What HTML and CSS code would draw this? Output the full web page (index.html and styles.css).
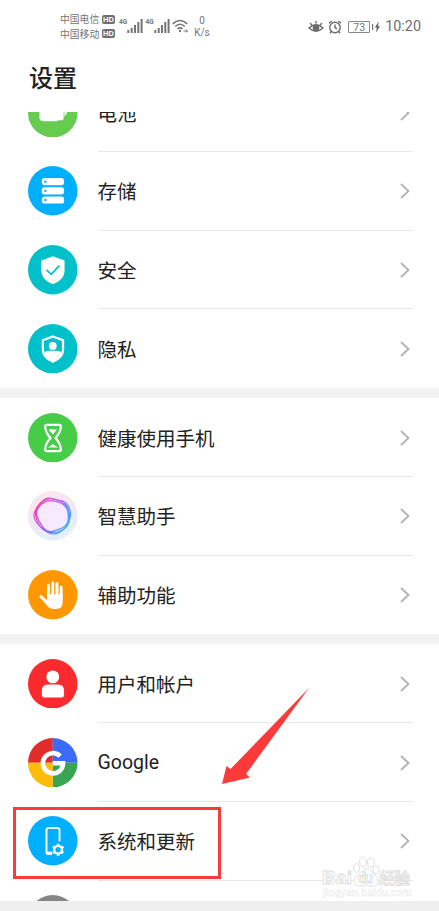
FILE: index.html
```html
<!DOCTYPE html>
<html lang="zh-CN">
<head>
<meta charset="utf-8">
<title>设置</title>
<link rel="stylesheet" href="styles.css">
</head>
<body>
<div class="screen">
  <header class="status">
    <div class="carriers">
      <div class="carrier">中国电信<span class="hd">HD</span></div>
      <div class="carrier">中国移动<span class="hd">HD</span></div>
    </div>
    <div class="signal"><span class="gen">4G</span>
      <svg width="16" height="14" viewBox="0 0 16 14"><path d="M1.3 11v3M4.7 9v5M8 6v8M11.3 3v11M14.6 0v14" stroke="#757575" stroke-width="2"/></svg></div>
    <div class="signal"><span class="gen">4G</span>
      <svg width="16" height="14" viewBox="0 0 16 14"><path d="M1.3 11v3M4.7 9v5M8 6v8M11.3 3v11M14.6 0v14" stroke="#757575" stroke-width="2"/></svg></div>
    <svg class="wifi" width="17" height="15" viewBox="0 0 17 15" fill="none" stroke="#757575" stroke-width="1.6"><path d="M.8 5Q8 -2 15.2 5M3.2 7.5Q8 3 12.8 7.5M5.5 10Q8 7.6 10.5 10"/><circle cx="8" cy="12" r="1.2" fill="#757575" stroke="none"/><path d="M11.5 12h4M14 10.5l1.5 1.5L14 13.5" stroke-width="1"/></svg>
    <div class="speed"><span>0</span><span>K/s</span></div>
    <div class="status-right">
      <svg class="eye" width="16" height="14" viewBox="0 0 16 14" fill="none" stroke="#6b6b6b" stroke-width="1.4"><path d="M1 8Q8 1.5 15 8Q8 14.5 1 8ZM2 3l1.7 2M8 1v2.5M14 3l-1.7 2"/><circle cx="8" cy="8" r="2.6" fill="#6b6b6b"/></svg>
      <svg class="alarm" width="14" height="14" viewBox="0 0 14 14" fill="none" stroke="#6b6b6b" stroke-width="1.4"><circle cx="7" cy="7.5" r="5.2"/><path d="M1 3.3L3.7 1M13 3.3L10.3 1M7 4.6v3l2 1.3M3.3 11.5L2 13.3M10.7 11.5l1.3 1.8"/></svg>
      <span class="battery">73</span>
      <svg class="bolt" width="9" height="12" viewBox="0 0 9 12"><path d="M.6 3v6" stroke="#777" stroke-width="1.2"/><path d="M6.8.5L2.8 6.5h2l-.8 5 4-6.3H6z" fill="#666"/></svg>
      <span class="clock">10:20</span>
    </div>
  </header>
  <h1 class="title">设置</h1>
  <main class="viewport">
    <div class="list">
      <section class="group">
        <div class="row">
          <svg class="icon" viewBox="0 0 49 49"><circle cx="24.5" cy="24.5" r="24.5" fill="#66cb4e"/><path d="M11.3 17h24v13q0 2-2 2h-3l-2 .8H15q-3.700 0-3.700-3zM36 20h2.500v5l-2.400 3.500z" fill="#fff"/></svg>
          <div class="cell"><span>电池</span><svg class="chevron" viewBox="0 0 10 16"><path d="M1 1l7.5 7L1 15"/></svg></div>
        </div>
        <div class="row">
          <svg class="icon" viewBox="0 0 49 49"><circle cx="24.5" cy="24.5" r="24.5" fill="#00b0ff"/><g fill="#fff"><rect x="13.7" y="12" width="22" height="7" rx="2.6"/><rect x="13.7" y="21.1" width="22" height="7" rx="2.6"/><rect x="13.7" y="30.2" width="22" height="7" rx="2.6"/></g><g fill="#00b0ff"><circle cx="17.2" cy="15.5" r="1.2"/><circle cx="17.2" cy="24.6" r="1.2"/><circle cx="17.2" cy="33.7" r="1.2"/></g></svg>
          <div class="cell"><span>存储</span><svg class="chevron" viewBox="0 0 10 16"><path d="M1 1l7.5 7L1 15"/></svg></div>
        </div>
        <div class="row">
          <svg class="icon" viewBox="0 0 49 49"><circle cx="24.5" cy="24.5" r="24.5" fill="#00c0ca"/><path d="M24.6 11.2L36.2 15.3V25c0 6.5-4 11-11.6 13.8C17 36 13.2 31.5 13.2 25V15.3z" fill="#fff"/><path d="M18.3 24.6l4.7 4.4 8-8.5" fill="none" stroke="#00c0ca" stroke-width="1.7"/></svg>
          <div class="cell"><span>安全</span><svg class="chevron" viewBox="0 0 10 16"><path d="M1 1l7.5 7L1 15"/></svg></div>
        </div>
        <div class="row">
          <svg class="icon" viewBox="0 0 49 49"><circle cx="24.5" cy="24.5" r="24.5" fill="#00c0ca"/><path d="M24.6 12.300L34.700 16V25c0 5.700-3.600 9.700-10.100 12.300C18 34.700 14.700 30.700 14.700 25V16z" fill="none" stroke="#fff" stroke-width="2.2"/><circle cx="24.5" cy="21.700" r="3.9" fill="#fff"/><path d="M15.500 29.500Q17 26.500 20.500 26.500h8Q32.300 26.500 33.800 29.500Q31 35 24.600 37.500Q18 35 15.500 29.500z" fill="#fff"/></svg>
          <div class="cell"><span>隐私</span><svg class="chevron" viewBox="0 0 10 16"><path d="M1 1l7.5 7L1 15"/></svg></div>
        </div>
      </section>
      <section class="group">
        <div class="row">
          <svg class="icon" viewBox="0 0 49 49"><circle cx="24.5" cy="24.5" r="24.5" fill="#46cc46"/><path d="M18.5 11.7h12.5q1.5 0 1.5 1.5c0 5.5-2 8-5.2 11.5c3.2 3.5 5.2 6 5.2 11.5q0 1.500-1.500 1.500H18.500q-1.500 0-1.500-1.500c0-5.500 2-8 5.200-11.500C19 21.200 17 18.700 17 13.200q0-1.500 1.500-1.500z" fill="none" stroke="#fff" stroke-width="2.2"/><path d="M20.500 16.500q2-1.200 4.200-.3 2.200.9 4.300-.3l-4.300 5.300zM19.500 34.200q2.500-1.200 5.200-3.400 2.700 2.200 5.300 3.400z" fill="#fff"/></svg>
          <div class="cell"><span>健康使用手机</span><svg class="chevron" viewBox="0 0 10 16"><path d="M1 1l7.5 7L1 15"/></svg></div>
        </div>
        <div class="row">
          <svg class="icon" viewBox="0 0 49 49"><defs><linearGradient id="ring" x1="0" y1="0.2" x2="1" y2="0.8"><stop offset="0" stop-color="#ff38a8"/><stop offset=".4" stop-color="#c550ef"/><stop offset=".7" stop-color="#5a80f4"/><stop offset="1" stop-color="#30b5f7"/></linearGradient><linearGradient id="halo" x1="0" y1="0" x2=".5" y2="1"><stop offset="0" stop-color="#fbe9e6"/><stop offset=".5" stop-color="#f3e6f7"/><stop offset="1" stop-color="#e2effc"/></linearGradient></defs><circle cx="24.5" cy="24.5" r="24.5" fill="url(#halo)"/><g fill="none" stroke="url(#ring)"><path d="M18 7.500C23 5.500 25 9 32 9.500S43 19 42 25 39 37 31 41 18 40.500 12.500 35.500 5 25 6.500 21 13 9.500 18 7.500z" fill="#f7eaff" stroke-width="1.1"/><path d="M20 7.800C25 7 33 9 37 13.500S43 28 39 34 27 42 20 40.500 9 31 7.500 24 14 8.500 20 7.800z" stroke-width="1.100"/><path d="M17 10.500C22 8 32 10.500 36 14S40.500 24 39.500 30 31 38 24 40 13 34 9.500 27 11 13.500 17 10.500z" stroke-width="1.300"/></g></svg>
          <div class="cell"><span>智慧助手</span><svg class="chevron" viewBox="0 0 10 16"><path d="M1 1l7.5 7L1 15"/></svg></div>
        </div>
        <div class="row">
          <svg class="icon" viewBox="0 0 49 49"><circle cx="24.5" cy="24.5" r="24.5" fill="#ff9800"/><g fill="none" stroke="#fff" stroke-linecap="round"><path d="M20.300 15v12M24.500 12.500V27M28.700 13.500V27M32.800 17v12" stroke-width="2.900"/><path d="M12.900 26.300l6.500 6.500" stroke-width="3"/></g><path d="M18.850 24h15.400v8.500q0 6.200-6.700 6.200h-1.500q-4.500 0-7-3.200l-4.500-5.500 4.300-.5z" fill="#fff"/></svg>
          <div class="cell"><span>辅助功能</span><svg class="chevron" viewBox="0 0 10 16"><path d="M1 1l7.5 7L1 15"/></svg></div>
        </div>
      </section>
      <section class="group">
        <div class="row">
          <svg class="icon" viewBox="0 0 49 49"><circle cx="24.5" cy="24.5" r="24.5" fill="#fb2a2e"/><circle cx="24.5" cy="17.7" r="6.4" fill="#fff"/><path d="M13.7 31.3q0-6 6-6h10q6 0 6 6V36q0 2-2 2h-18q-2 0-2-2z" fill="#fff"/></svg>
          <div class="cell"><span>用户和帐户</span><svg class="chevron" viewBox="0 0 10 16"><path d="M1 1l7.5 7L1 15"/></svg></div>
        </div>
        <div class="row">
          <svg class="icon" viewBox="0 0 49 49"><path d="M24.5 24.5V0A24.5 24.5 0 0 0 0 24.5z" fill="#e02d2c"/><path d="M24.5 24.5H49A24.5 24.5 0 0 0 24.5 0z" fill="#3b6bf8"/><path d="M24.5 24.5V49A24.5 24.5 0 0 0 49 24.5z" fill="#38a652"/><path d="M24.5 24.5H0A24.5 24.5 0 0 0 24.5 49z" fill="#fdbc08"/><path d="M31.800 18A10 10 0 1 0 34.700 25H24.500" fill="none" stroke="#fff" stroke-width="4.600"/></svg>
          <div class="cell"><span class="latin">Google</span><svg class="chevron" viewBox="0 0 10 16"><path d="M1 1l7.5 7L1 15"/></svg></div>
        </div>
        <div class="row">
          <svg class="icon" viewBox="0 0 49 49"><circle cx="24.5" cy="24.5" r="24.5" fill="#00b0ff"/><path d="M24 37.500H20q-1.700 0-1.700-1.700V13.700q0-1.700 1.700-1.700h9.500q1.700 0 1.700 1.700V25" fill="none" stroke="#fff" stroke-width="1.900"/><path d="M18.500 36.700h5" stroke="#fff" stroke-width="3"/><circle cx="29.800" cy="33.400" r="5" fill="#fff"/><path d="M29.800 27.400v12M24.600 30.400l10.400 6M24.600 36.400l10.400-6" stroke="#fff" stroke-width="2.600"/><circle cx="29.800" cy="33.400" r="2.700" fill="#00b0ff"/></svg>
          <div class="cell"><span>系统和更新</span><svg class="chevron" viewBox="0 0 10 16"><path d="M1 1l7.5 7L1 15"/></svg></div>
        </div>
        <div class="row">
          <svg class="icon" viewBox="0 0 49 49"><circle cx="24.5" cy="24.5" r="24.5" fill="#858585"/></svg>
          <div class="cell"></div>
        </div>
      </section>
    </div>
  </main>
  <footer class="bottom"></footer>
  <div class="highlight"></div>
  <svg class="arrow" width="90" height="98" viewBox="0 0 90 98"><path d="M88 1L25 87l4 3.500L1 97 5.500 79l4 3z" fill="#fc3a3a"/></svg>
  <svg class="watermark" width="100" height="48" viewBox="0 0 100 48"><g fill="#fff" stroke="#e0e0e0"><ellipse cx="35.500" cy="18" rx="3" ry="4.300"/><ellipse cx="42" cy="12" rx="3.500" ry="4.800"/><ellipse cx="50" cy="12.500" rx="3.500" ry="4.500"/><ellipse cx="55" cy="20" rx="3" ry="4"/><path d="M45 19c3-2 6 2 8 5s6 4 4 9-8 3-13 2c-4 1-10 2-11-3s2-5 5-8 4-4 7-5z"/></g><g class="mark"><text x="1" y="33.500" textLength="30" lengthAdjust="spacingAndGlyphs">Bai</text><text x="37" y="33" font-size="14" textLength="15">du</text><text class="cjk" x="58" y="34" textLength="31">经验</text></g><text class="url" x="2" y="46" textLength="88">jingyan.baidu.com</text></svg>
</div>
</body>
</html>
```
FILE: styles.css
```css
* { box-sizing: border-box; }
body {
  margin: 0;
  background: #fff;
  color: #222;
  font-family: "Noto Sans CJK SC", sans-serif;
}
svg { display: block; flex: none; }
.screen {
  position: relative;
  width: 439px;
  height: 911px;
  overflow: hidden;
  display: flex;
  flex-direction: column;
}
.status {
  height: 54px;
  flex: none;
  display: flex;
  align-items: flex-start;
  padding: 12px 18px 0 60px;
  color: #757575;
}
.carriers { width: 59px; flex: none; }
.carrier {
  display: flex;
  align-items: center;
  gap: 3px;
  height: 14.5px;
  font-size: 9.8px;
  line-height: 14.5px;
  white-space: nowrap;
}
.hd {
  width: 12.5px;
  height: 9px;
  border-radius: 2px;
  background: #707070;
  color: #fff;
  font: bold 7.5px/9px "Liberation Sans", sans-serif;
  text-align: center;
}
.signal { display: flex; align-items: flex-start; width: 26.5px; }
.signal svg { margin-top: 7px; }
.gen {
  width: 8px;
  margin-top: 6px;
  flex: none;
  font: bold 6.5px/8px Roboto, sans-serif;
}
.wifi { margin-top: 7px; }
.speed {
  width: 20px;
  display: flex;
  flex-direction: column;
  align-items: center;
  margin: 3px 0 0 3px;
  font: 10px/11.5px Roboto, sans-serif;
}
.status-right {
  display: flex;
  align-items: center;
  height: 20px;
  margin: 5px 0 0 auto;
}
.alarm { margin-left: 4px; }
.battery {
  width: 22px;
  height: 12px;
  margin-left: 6px;
  border: 1px solid #888;
  border-radius: 1px;
  font: 10.5px/11px Roboto, sans-serif;
  text-align: center;
}
.bolt { margin-left: 2px; }
.clock { margin-left: 4px; font: 14.4px/20px Roboto, sans-serif; color: #6c6c6c; }
.title {
  height: 58px;
  flex: none;
  margin: 0;
  padding-left: 29px;
  font-size: 24px;
  font-weight: 500;
  line-height: 46px;
}
.viewport { height: 789px; flex: none; overflow: hidden; }
.list { margin-top: -39px; display: flex; flex-direction: column; gap: 10px; background: #f3f3f3; }
.group { background: #fff; }
.row {
  height: 78.75px;
  display: flex;
  align-items: center;
  gap: 20px;
  padding: 0 26px 0 28px;
}
.icon { width: 49.5px; height: 49.5px; }
.cell {
  flex: 1;
  height: 100%;
  display: flex;
  align-items: center;
  justify-content: space-between;
  padding: 1.5px 3px 0 0;
  border-bottom: 1px solid #e8e8e8;
  font-size: 19.5px;
  line-height: 30px;
}
.row:last-child .cell { border-color: transparent; }
.latin { font-family: Roboto, sans-serif; font-size: 19.5px; }
.chevron { width: 10px; height: 16px; fill: none; stroke: #b3b3b3; stroke-width: 1.8; }
.bottom { height: 10px; flex: none; background: #efefef; }
.highlight {
  position: absolute;
  left: 13px;
  top: 807px;
  width: 208px;
  height: 72px;
  border: 3px solid #fc3a3a;
}
.arrow { position: absolute; left: 221px; top: 687px; }
.watermark { position: absolute; left: 321px; top: 850px; }
.mark {
  fill: #fff;
  stroke: #dcdcdc;
  stroke-width: .8px;
  font-family: "Liberation Sans", "Noto Sans CJK SC", sans-serif;
  font-size: 19px;
  font-weight: bold;
}
.cjk { font-size: 16px; font-weight: 500; }
.url {
  fill: #f6f6f6;
  stroke: #ececec;
  stroke-width: .4px;
  font: 10px "Liberation Sans", sans-serif;
}
```
